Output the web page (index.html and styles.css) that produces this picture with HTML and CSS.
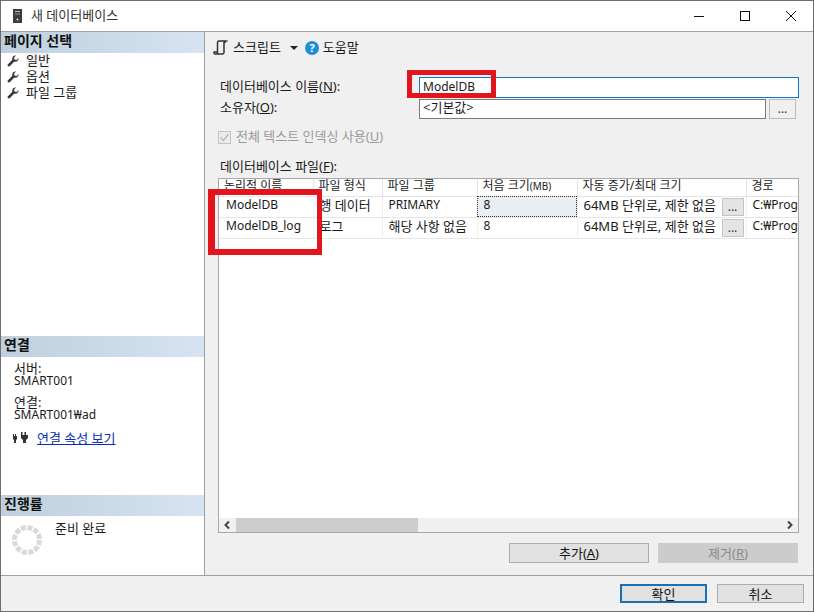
FILE: index.html
```html
<!DOCTYPE html>
<html lang="ko">
<head>
<meta charset="utf-8">
<title>새 데이터베이스</title>
<link rel="stylesheet" href="styles.css">
</head>
<body>
<div class="window">
  <header class="titlebar">
    <svg class="app-icon" width="9" height="14" viewBox="0 0 9 14"><rect width="9" height="14" fill="#3c3c3c"/><rect x="2" y="2" width="5" height="1" fill="#bbb"/><rect x="2" y="4.500" width="5" height="1" fill="#999"/><circle cx="4.500" cy="10.500" r="1" fill="#ddd"/></svg>
    <span class="title">새 데이터베이스</span>
    <div class="controls">
      <svg width="12" height="12" viewBox="0 0 12 12"><path d="M1 6.500h10" stroke="#111" fill="none"/></svg>
      <svg width="12" height="12" viewBox="0 0 12 12"><rect x="1.500" y="1.500" width="9" height="9" stroke="#111" fill="none"/></svg>
      <svg width="12" height="12" viewBox="0 0 12 12"><path d="M1 1l10 10M11 1L1 11" stroke="#111" fill="none"/></svg>
    </div>
  </header>
  <div class="main">
    <aside class="sidebar">
      <section class="side-section pages">
        <h2 class="side-head">페이지 선택</h2>
        <ul class="page-list">
          <li class="page-item"><svg class="wrench" width="12" height="12" viewBox="0 0 13 13"><path d="M12.500 3.200a3.600 3.600 0 0 1-4.700 4L3.200 12a1.500 1.500 0 0 1-2.200-2.100l4.800-4.700A3.600 3.600 0 0 1 9.800.5L7.700 2.700l.4 2.200 2.200.4z" fill="#3a3a3a"/></svg><span class="page-active">일반</span></li>
          <li class="page-item"><svg class="wrench" width="12" height="12" viewBox="0 0 13 13"><path d="M12.500 3.200a3.600 3.600 0 0 1-4.700 4L3.200 12a1.500 1.500 0 0 1-2.200-2.100l4.800-4.700A3.600 3.600 0 0 1 9.800.5L7.700 2.700l.4 2.200 2.200.4z" fill="#3a3a3a"/></svg><span>옵션</span></li>
          <li class="page-item"><svg class="wrench" width="12" height="12" viewBox="0 0 13 13"><path d="M12.500 3.200a3.600 3.600 0 0 1-4.700 4L3.200 12a1.500 1.500 0 0 1-2.200-2.100l4.800-4.700A3.600 3.600 0 0 1 9.800.5L7.700 2.700l.4 2.200 2.200.4z" fill="#3a3a3a"/></svg><span>파일 그룹</span></li>
        </ul>
      </section>
      <section class="side-section connection">
        <h2 class="side-head">연결</h2>
        <div class="conn-body">
          <p class="conn-text">서버:<br><span class="latin">SMART001</span></p>
          <p class="conn-text">연결:<br><span class="latin">SMART001₩ad</span></p>
          <div class="conn-link">
            <svg width="18" height="12" viewBox="0 0 18 12"><path d="M1 2h1v2h1V2h1v2h1v3L4 8v3H2V8L1 7z" fill="#333"/><path d="M9 0h1.500v3h2V0H14v3h2v3l-2 2v3h-3V8L9 6z" fill="#333"/></svg>
            <a href="#" class="link">연결 속성 보기</a>
          </div>
        </div>
      </section>
      <section class="side-section progress">
        <h2 class="side-head">진행률</h2>
        <div class="progress-body">
          <svg class="spinner" width="32" height="32" viewBox="0 0 32 32"><circle cx="16" cy="16" r="12.500" fill="none" stroke="#d9d9d9" stroke-width="5" stroke-dasharray="5 1.550"/></svg>
          <span class="progress-text">준비 완료</span>
        </div>
      </section>
    </aside>
    <div class="content">
      <div class="toolbar">
        <svg class="script-icon" width="16" height="16" viewBox="0 0 16 16"><path d="M4.500 14V2.500a1.500 1.500 0 0 1 1.500-1.500h8.500M12 1v2M4.500 14H2a1 1 0 0 1-1-1v-1h3.500M4.500 14h5a1.500 1.500 0 0 0 1.500-1.500V1" fill="none" stroke="#333" stroke-width="1.500"/></svg>
        <span class="tool-text">스크립트</span>
        <svg class="caret" width="8" height="4" viewBox="0 0 8 4"><path d="M0 0h8L4 4z" fill="#222"/></svg>
        <svg class="help" width="14" height="14" viewBox="0 0 14 14"><circle cx="7" cy="7" r="7" fill="#1c8fd6"/><text x="7" y="11" class="help-mark">?</text></svg>
        <span class="tool-text">도움말</span>
      </div>
      <div class="form-row name-row">
        <label class="form-label">데이터베이스 이름(<u>N</u>):</label>
        <div class="text-input focus latin">ModelDB</div>
      </div>
      <div class="form-row owner-row">
        <label class="form-label">소유자(<u>O</u>):</label>
        <div class="text-input owner">&lt;기본값&gt;</div>
        <button class="dots owner-dots">...</button>
      </div>
      <div class="check-row">
        <span class="checkbox"><svg width="11" height="11" viewBox="0 0 11 11"><path d="M1.500 5.500l3 3 5-6.500" fill="none" stroke="#b5b5b5" stroke-width="1.300"/></svg></span>
        <span class="check-label">전체 텍스트 인덱싱 사용(<u>U</u>)</span>
      </div>
      <div class="files-label">데이터베이스 파일(<u>F</u>):</div>
      <div class="grid-box">
        <div class="table-wrap">
          <table class="files">
            <colgroup><col class="c1"><col class="c2"><col class="c3"><col class="c4"><col class="c5"><col class="c6"></colgroup>
            <thead>
              <tr><th>논리적 이름</th><th>파일 형식</th><th>파일 그룹</th><th>처음 크기<span class="unit">(MB)</span></th><th>자동 증가/최대 크기</th><th>경로</th></tr>
            </thead>
            <tbody>
              <tr>
                <td class="name latin">ModelDB</td><td>행 데이터</td><td class="latin">PRIMARY</td><td class="selected latin">8</td>
                <td class="auto-cell"><div class="auto"><span>64MB 단위로, 제한 없음</span><button class="dots">...</button></div></td>
                <td class="path latin">C:₩Program Files</td>
              </tr>
              <tr>
                <td class="name latin">ModelDB_log</td><td>로그</td><td>해당 사항 없음</td><td class="latin">8</td>
                <td class="auto-cell"><div class="auto"><span>64MB 단위로, 제한 없음</span><button class="dots">...</button></div></td>
                <td class="path latin">C:₩Program Files</td>
              </tr>
            </tbody>
          </table>
        </div>
        <div class="hscroll">
          <svg class="arrow" width="17" height="14" viewBox="0 0 17 14"><path d="M10 3.500L6.500 7l3.500 3.500" fill="none" stroke="#444" stroke-width="2"/></svg>
          <div class="thumb"></div>
          <div class="track"></div>
          <svg class="arrow" width="17" height="14" viewBox="0 0 17 14"><path d="M7 3.500L10.500 7 7 10.500" fill="none" stroke="#444" stroke-width="2"/></svg>
        </div>
      </div>
      <div class="grid-actions">
        <button class="btn wide">추가(<u>A</u>)</button>
        <button class="btn wide disabled">제거(<u>R</u>)</button>
      </div>
    </div>
  </div>
  <footer class="footer">
    <button class="btn dialog primary">확인</button>
    <button class="btn dialog">취소</button>
  </footer>
  <div class="mark mark-name"></div>
  <div class="mark mark-files"></div>
</div>
</body>
</html>
```
FILE: styles.css
```css
* { box-sizing: border-box; }
html, body { margin: 0; padding: 0; }
body {
  width: 814px;
  height: 612px;
  overflow: hidden;
  font-family: "Noto Sans", "Noto Sans CJK KR", sans-serif;
  font-size: 13px;
  color: #1a1a1a;
}
.latin { font-size: 12px; }
.window {
  position: relative;
  width: 814px;
  height: 612px;
  display: flex;
  flex-direction: column;
  border: 1px solid #6e6e6e;
  background: #f0f0f0;
}
.titlebar {
  height: 31px;
  flex: none;
  display: flex;
  align-items: center;
  background: #fff;
  border-bottom: 1px solid #a0a0a0;
  padding-left: 12px;
}
.title { margin-left: 9px; font-size: 13px; line-height: 16px; padding-bottom: 2px; color: #333; }
.controls {
  margin-left: auto;
  display: flex;
  gap: 34px;
  padding-right: 16px;
  align-items: center;
}
.controls svg { display: block; }
.main { flex: 1; display: flex; min-height: 0; }
.sidebar {
  width: 204px;
  flex: none;
  background: #fff;
  border-right: 1px solid #a0a0a0;
  display: flex;
  flex-direction: column;
}
.side-section { display: flex; flex-direction: column; }
.pages { flex: 1; }
.connection { height: 159px; flex: none; }
.progress { height: 80px; flex: none; }
.side-head {
  margin: 0;
  height: 21px;
  flex: none;
  padding-left: 3px;
  font-size: 14px;
  line-height: 17px;
  font-weight: 700;
  color: #111;
  background: linear-gradient(90deg, #bfcfdd, #d6e4f2);
}
.page-list { list-style: none; margin: 0; padding: 0 0 0 6px; }
.page-item { display: flex; align-items: center; height: 16px; gap: 7px; line-height: 14px; }
.page-item span { padding-bottom: 2px; }
.wrench { flex: none; }
.page-active { background: #f4f4f4; }
.conn-body { padding: 5px 0 0 13px; }
.conn-text { margin: 0 0 9px; line-height: 12px; }
.conn-link { display: flex; align-items: center; gap: 7px; margin: 3px 0 0 -2px; line-height: 16px; }
.link { color: #0a2fb5; text-decoration: underline; }
.progress-body { position: relative; display: flex; padding: 5px 0 0 10px; }
.spinner { margin-top: 3px; }
.progress-text { margin-left: 12px; line-height: 14px; }
.content {
  flex: 1;
  min-width: 0;
  padding-left: 13px;
  display: flex;
  flex-direction: column;
}
.toolbar { height: 30px; flex: none; display: flex; align-items: center; padding-top: 1px; }
.script-icon { margin-left: -5px; }
.tool-text { line-height: 16px; margin-left: 4px; padding-bottom: 2px; }
.caret { margin-left: 9px; }
.help { margin-left: 7px; }
.help-mark { font-size: 11px; font-weight: 700; fill: #fff; text-anchor: middle; }
.form-row { display: flex; padding-left: 2px; align-items: center; }
.name-row { margin-top: 15px; height: 21px; }
.owner-row { margin-top: 1px; height: 20px; }
.form-label { width: 199px; flex: none; line-height: 16px; padding-bottom: 4px; }
.text-input {
  height: 100%;
  width: 380px;
  border: 1px solid #0f78c8;
  background: #fff;
  padding-left: 3px;
  line-height: 18px;
}
.owner { width: 347px; border-color: #7a7a7a; line-height: 15px; }
.dots {
  font: inherit;
  font-size: 12px;
  border: 1px solid #c4c4c4;
  background: #e4e4e4;
  padding: 0;
  line-height: 12px;
  color: #333;
}
.owner-dots { width: 27px; height: 20px; margin-left: 3px; background: #f0f0f0; border-color: #bbb; }
.check-row { display: flex; align-items: center; margin-top: 11px; height: 14px; line-height: 14px; color: #9a9a9a; }
.checkbox {
  width: 13px;
  height: 13px;
  border: 1px solid #c4c4c4;
  background: #ececec;
  margin-right: 5px;
  display: flex;
  align-items: center;
  justify-content: center;
}
.check-label { padding-bottom: 2px; }
.files-label { margin-top: 16px; height: 18px; line-height: 13px; padding-left: 2px; flex: none; }
.grid-box {
  width: 581px;
  height: 355px;
  flex: none;
  border: 1px solid #a9a9a9;
  background: #fff;
  display: flex;
  flex-direction: column;
}
.table-wrap { flex: 1; overflow: hidden; min-height: 0; }
.files { border-collapse: collapse; table-layout: fixed; width: 579px; }
.c1 { width: 94px; } .c2 { width: 69px; } .c3 { width: 95px; }
.c4 { width: 100px; } .c5 { width: 169px; } .c6 { width: 52px; }
.files th {
  font-weight: 400;
  font-size: 12px;
  line-height: 14px;
  text-align: left;
  height: 17px;
  padding: 0 0 2px 5px;
  border-right: 1px solid #e4e4e4;
  border-bottom: 1px solid #e4e4e4;
  white-space: nowrap;
  color: #222;
}
.unit { font-size: 10px; }
.files td {
  height: 21px;
  line-height: 16px;
  padding: 0 0 3px 6px;
  border-right: 1px solid #efefef;
  border-bottom: 1px solid #e6e6e6;
  white-space: nowrap;
}
.files td.name { padding-left: 7px; }
.files td.selected { background: #e9eef3; outline: 1px dotted #333; outline-offset: -1px; }
.files td.path { border-right: 0; overflow: hidden; }
.files td.auto-cell { padding-bottom: 0; }
.auto { display: flex; align-items: center; justify-content: space-between; padding-right: 2px; height: 20px; }
.auto span { padding-bottom: 3px; }
.auto .dots { width: 22px; height: 18px; }
.hscroll { height: 14px; flex: none; display: flex; background: #f0f0f0; align-items: stretch; }
.arrow { flex: none; display: block; }
.thumb { width: 182px; background: #cdcdcd; }
.track { flex: 1; }
.grid-actions { display: flex; justify-content: flex-end; gap: 9px; width: 580px; margin-top: 10px; }
.btn {
  font: inherit;
  border: 1px solid #adadad;
  background: #e1e1e1;
  color: #111;
  padding: 0;
  line-height: 16px;
}
.wide { width: 140px; height: 20px; }
.disabled { background: #cccccc; border-color: #cccccc; color: #8a8a8a; }
.footer {
  height: 36px;
  flex: none;
  border-top: 1px solid #a0a0a0;
  display: flex;
  justify-content: flex-end;
  gap: 10px;
  padding: 8px 9px 0 0;
}
.dialog { width: 87px; height: 19px; }
.primary { border: 2px solid #1a6fb5; }
.mark { position: absolute; border-style: solid; border-color: #e2151f; pointer-events: none; }
.mark-name { left: 406px; top: 69px; width: 89px; height: 28px; border-width: 5px; }
.mark-files { left: 207px; top: 188px; width: 114px; height: 66px; border-width: 6px 5px 6px 7px; }
```
